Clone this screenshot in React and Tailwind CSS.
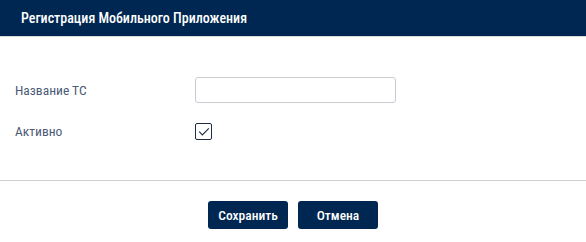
import React from 'react';

export default function App() {
  return (
    <div className="w-[586px] h-[242px] bg-white flex flex-col font-['Roboto',sans-serif] font-stretch-condensed">
      {/* Header */}
      <div className="h-[37px] shrink-0 bg-[#002752] border-b border-[#d9d9d9] flex items-center px-[21px]">
        <h1 className="text-white text-[14px] font-medium">Регистрация Мобильного Приложения</h1>
      </div>

      {/* Form */}
      <div className="h-[144px] shrink-0 border-b border-[#d0d0d0] pt-[40px] px-[15px]">
        <div className="flex items-center h-[26px]">
          <label className="w-[180px] text-[13.5px] text-[#4d5a78]">Название ТС</label>
          <input className="w-[201px] h-[26px] border border-[#c9ccd1] rounded-[3px] outline-none px-2 text-[13px]" />
        </div>
        <div className="flex items-center h-[17px] mt-[20px]">
          <label className="w-[180px] text-[13.5px] text-[#4d5a78]">Активно</label>
          <span className="w-[17px] h-[17px] border border-[#1e2d45] rounded-[2px] flex items-center justify-center">
            <svg viewBox="0 0 16 16" className="w-[14px] h-[14px]" fill="none" stroke="#1e2d45" strokeWidth="1.3">
              <path d="M2.5 7.6l3.6 3.8L13.5 3.8" />
            </svg>
          </span>
        </div>
      </div>

      {/* Footer */}
      <div className="flex justify-center gap-[10px] pt-[20px]">
        <button className="w-[80px] h-[28px] bg-[#002752] text-white text-[13.5px] font-medium rounded-[3px]">Сохранить</button>
        <button className="w-[80px] h-[28px] bg-[#002752] text-white text-[13.5px] font-medium rounded-[3px]">Отмена</button>
      </div>
    </div>
  );
}
